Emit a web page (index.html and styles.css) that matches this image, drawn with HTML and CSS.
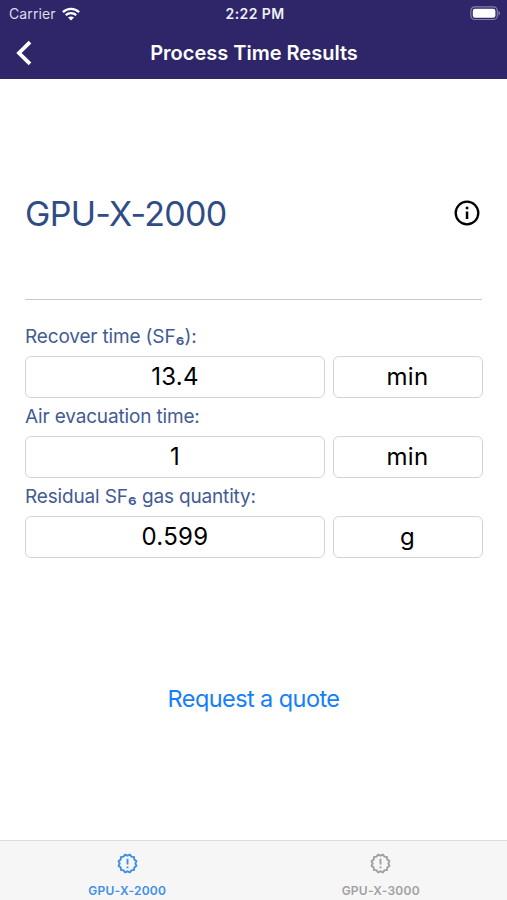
FILE: index.html
```html
<!DOCTYPE html>
<html lang="en">
<head>
<meta charset="utf-8">
<meta name="viewport" content="width=device-width, initial-scale=1">
<title>Process Time Results</title>
<link rel="stylesheet" href="styles.css">
</head>
<body>
<header class="header">
  <div class="status">
    <div class="carrier"><span>Carrier</span>
      <svg class="wifi" viewBox="0 0 18 14" width="18" height="14"><g fill="none" stroke="#fff" stroke-width="2.3"><path d="M.9 5.1C5.4.7 12.6.7 17.1 5.1"/><path d="M3.8 8.2c2.9-2.8 7.5-2.8 10.4 0"/></g><path fill="#fff" d="M6 10.5c1.7-1.5 4.3-1.5 6 0l-3 3z"/></svg>
    </div>
    <span class="clock">2:22 PM</span>
    <svg class="battery" viewBox="0 0 31 15" width="31" height="15"><rect x=".9" y=".9" width="26.4" height="12.6" rx="3.8" fill="none" stroke="#8480ae" stroke-width="1.2"/><rect x="2.8" y="2.7" width="22.6" height="9" rx="2.2" fill="#fff"/><path fill="#8480ae" d="M28.5 5c2 .7 2 3.7 0 4.4z"/></svg>
  </div>
  <div class="nav">
    <svg class="back" viewBox="0 0 18 28" width="18" height="28"><path d="M15 3.2 4 14l11 10.8" fill="none" stroke="#fff" stroke-width="3.8"/></svg>
    <h1 class="title">Process Time Results</h1>
  </div>
</header>
<main class="content">
  <section class="product">
    <h2 class="name">GPU-X-2000</h2>
    <svg class="info" viewBox="0 0 26 26" width="26" height="26"><circle cx="13" cy="13" r="11.3" fill="none" stroke="#000" stroke-width="2.3"/><path d="M11.8 6.8h2.5v2.5h-2.5zM11.8 11.5h2.5v7.6h-2.5z"/></svg>
  </section>
  <section class="results">
    <div class="label">Recover time (SF<span class="six">₆</span>):</div>
    <div class="row"><div class="field">13.4</div><div class="field">min</div></div>
    <div class="label">Air evacuation time:</div>
    <div class="row"><div class="field">1</div><div class="field">min</div></div>
    <div class="label">Residual SF<span class="six">₆</span> gas quantity:</div>
    <div class="row"><div class="field">0.599</div><div class="field">g</div></div>
  </section>
  <a class="quote">Request a quote</a>
</main>
<nav class="tabs">
  <div class="tab active">
    <svg viewBox="0 0 24 24" width="23" height="23"><path fill="none" stroke="currentColor" stroke-width="2" d="M12 3.8l2.48-1.07L16.1 4.9l2.69.31.31 2.69 2.17 1.62L20.2 12l1.07 2.48-2.17 1.62-.31 2.69-2.69.31-1.62 2.17L12 20.2l-2.48 1.07L7.9 19.1l-2.69-.31-.31-2.69-2.17-1.62L3.8 12 2.73 9.52 4.9 7.9l.31-2.69L7.9 4.9l1.62-2.17z"/><path fill="currentColor" d="M11 7h2v6h-2zM11 15h2v2h-2z"/></svg>
    <span>GPU-X-2000</span>
  </div>
  <div class="tab">
    <svg viewBox="0 0 24 24" width="23" height="23"><path fill="none" stroke="currentColor" stroke-width="2" d="M12 3.8l2.48-1.07L16.1 4.9l2.69.31.31 2.69 2.17 1.62L20.2 12l1.07 2.48-2.17 1.62-.31 2.69-2.69.31-1.62 2.17L12 20.2l-2.48 1.07L7.9 19.1l-2.69-.31-.31-2.69-2.17-1.62L3.8 12 2.73 9.52 4.9 7.9l.31-2.69L7.9 4.9l1.62-2.17z"/><path fill="currentColor" d="M11 7h2v6h-2zM11 15h2v2h-2z"/></svg>
    <span>GPU-X-3000</span>
  </div>
</nav>
</body>
</html>
```
FILE: styles.css
```css
* { box-sizing: border-box; }
body {
  margin: 0;
  height: 900px;
  display: flex;
  flex-direction: column;
  overflow: hidden;
  background: #fff;
  color: #000;
  font-family: Inter, "Liberation Sans", sans-serif;
}
svg { display: block; flex: none; }
h1, h2 { margin: 0; }
.header { height: 79px; flex: none; background: #2e2669; color: #fff; }
.status {
  height: 27px;
  display: grid;
  grid-template-columns: 1fr auto 1fr;
  align-items: center;
  padding: 0 6px 0 9px;
}
.carrier { display: flex; align-items: center; gap: 6px; font-size: 14px; letter-spacing: 0.1px; color: #dedcea; }
.clock { font-size: 14px; font-weight: 600; letter-spacing: 0.4px; color: #f0effa; }
.battery { justify-self: end; }
.nav {
  height: 52px;
  display: grid;
  grid-template-columns: 24px 1fr 24px;
  align-items: center;
  padding: 1px 14px 1px 15px;
}
.title { text-align: center; font-size: 20px; line-height: 24px; font-weight: 600; }
.content { flex: 1; padding: 0 25px; display: flex; flex-direction: column; }
.product {
  height: 221px;
  display: flex;
  align-items: flex-start;
  justify-content: space-between;
  padding: 114px 2px 0 0;
  border-bottom: 1px solid #c8c8c8;
}
.name { font-size: 34px; line-height: 42px; font-weight: 400; letter-spacing: -0.7px; color: #2f4d84; }
.info { margin-top: 7px; }
.results { padding-top: 18px; }
.label { height: 38px; line-height: 38px; font-size: 19px; letter-spacing: -0.16px; color: #435b94; white-space: nowrap; }
.six { font-size: 20px; line-height: 0; font-weight: 500; vertical-align: 1px; }
.row { display: grid; grid-template-columns: 300px 150px; gap: 7.5px; height: 42px; }
.field {
  height: 41.5px;
  border: 1px solid #d4d4d4;
  border-radius: 6px;
  font-size: 24px;
  line-height: 39px;
  letter-spacing: 0.3px;
  text-align: center;
}
.quote { align-self: center; margin-top: 126px; font-size: 23.5px; line-height: 30px; letter-spacing: -0.58px; color: #147efb; }
.tabs {
  height: 60px;
  flex: none;
  display: grid;
  grid-template-columns: 1fr 1fr;
  background: #f7f6f7;
  border-top: 1px solid #dcdcdc;
}
.tab { display: flex; flex-direction: column; align-items: center; padding: 11px 0 0 1px; color: #a0a0a0; }
.tab span { margin-top: 8px; font-size: 12px; line-height: 16px; font-weight: 600; letter-spacing: 0.25px; }
.active { color: #3d8fe8; }
```
